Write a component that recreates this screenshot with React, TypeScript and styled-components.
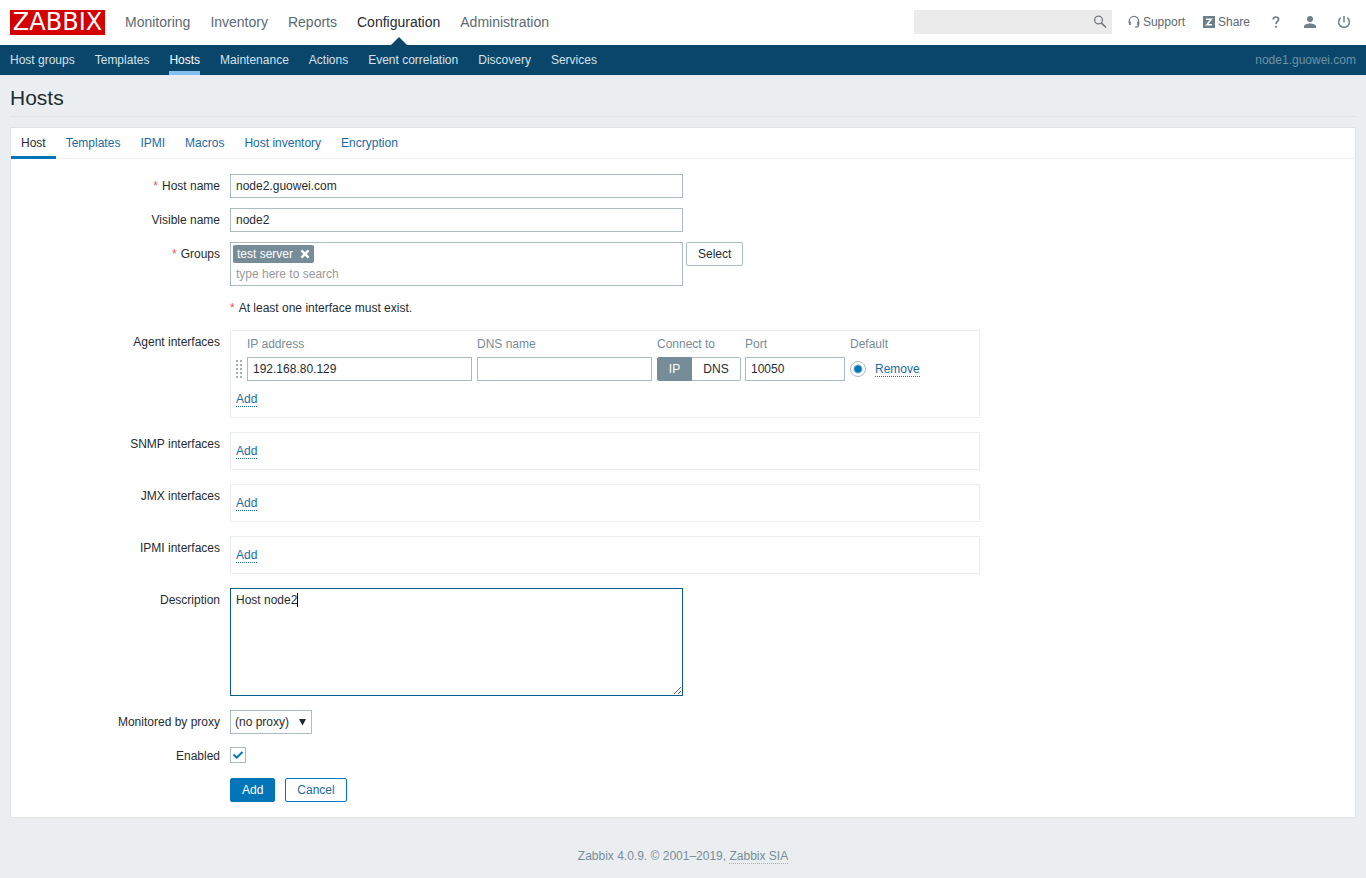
import React, { useEffect, useRef } from "react";
import styled, { createGlobalStyle, css } from "styled-components";

const GlobalStyle = createGlobalStyle`
  *, *::before, *::after { box-sizing: border-box; }
  html { background: #ebeef0; }
  body {
    margin: 0;
    color: #1f2c33;
    background: #ebeef0;
    font: 12px/16px Arial, "Liberation Sans", sans-serif;
  }
  button, input, select, textarea { font: inherit; color: inherit; margin: 0; }
  a { text-decoration: none; color: inherit; }
`;

const TopBar = styled.header`
  display: flex;
  align-items: flex-start;
  height: 45px;
  padding: 0 10px;
  background: #ffffff;
`;

const Logo = styled.a`
  width: 95px;
  height: 25px;
  margin: 10px 20px 0 0;
  background: #d40000;
  color: #ffffff;
  font-family: "DejaVu Sans", sans-serif;
  font-size: 24px;
  line-height: 25px;
  text-align: center;
`;

const MainNav = styled.nav`
  display: flex;
  gap: 20px;
  flex: 1;
  font-size: 14px;
  line-height: 45px;
`;

const MainLink = styled.a<{ $active?: boolean }>`
  position: relative;
  height: 45px;
  color: ${(p) => (p.$active ? "#1f2c33" : "#5c6a72")};
  ${(p) =>
    p.$active &&
    css`
      &::after {
        content: "";
        position: absolute;
        left: 50%;
        bottom: 0;
        margin-left: -8px;
        border: solid transparent;
        border-width: 0 8px 8px;
        border-bottom-color: #0a466a;
      }
    `}
`;

const Search = styled.form`
  display: flex;
  align-items: center;
  width: 198px;
  height: 24px;
  margin: 10px 16px 0 0;
  background: #ebebeb;
`;

const SearchInput = styled.input`
  flex: 1;
  min-width: 0;
  height: 24px;
  padding: 0 5px;
  border: 0;
  background: transparent;
  outline: 0;
`;

const IconButton = styled.button`
  display: flex;
  align-items: center;
  justify-content: center;
  width: 24px;
  height: 24px;
  padding: 0;
  border: 0;
  background: transparent;
`;

const Tools = styled.nav`
  display: flex;
  align-items: center;
  gap: 18px;
  height: 24px;
  margin: 10px 4px 0 0;
  color: #5c6a72;
`;

const Tool = styled.a`
  display: flex;
  align-items: center;
  justify-content: center;
  gap: 3px;
  min-width: 16px;
`;

const SubBar = styled.div`
  display: flex;
  justify-content: space-between;
  height: 30px;
  padding: 0 10px;
  background: #0a466a;
  line-height: 30px;
`;

const SubNav = styled.nav`
  display: flex;
  gap: 20px;
`;

const SubLink = styled.a<{ $active?: boolean }>`
  height: 30px;
  color: ${(p) => (p.$active ? "#ffffff" : "#d5e3ec")};
  box-shadow: ${(p) => (p.$active ? "inset 0 -4px #87c0ee" : "none")};
`;

const ServerName = styled.span`
  color: #6f93a8;
`;

const Page = styled.main`
  padding: 0 10px;
`;

const TitleBar = styled.div`
  height: 42px;
  margin-bottom: 10px;
  border-bottom: 1px solid #dfe4e7;
`;

const Title = styled.h1`
  margin: 0;
  font-size: 21px;
  font-weight: normal;
  line-height: 45px;
`;

const Panel = styled.section`
  padding-bottom: 10px;
  background: #ffffff;
  border: 1px solid #dfe4e7;
`;

const Tabs = styled.nav`
  display: flex;
  height: 31px;
  border-bottom: 1px solid #ebeef0;
  line-height: 30px;
`;

const Tab = styled.a<{ $active?: boolean }>`
  height: 31px;
  padding: 0 10px;
  color: ${(p) => (p.$active ? "#1f2c33" : "#1a6aa5")};
  box-shadow: ${(p) => (p.$active ? "inset 0 -3px #0275b8" : "none")};
`;

const Form = styled.form`
  padding-top: 10px;
`;

const Row = styled.div<{ $roomy?: boolean }>`
  display: grid;
  grid-template-columns: 209px minmax(0, 1fr);
  column-gap: 10px;
  padding: 5px 0 ${(p) => (p.$roomy ? 9 : 5)}px;
`;

const labelText = css`
  line-height: 24px;
  text-align: right;
`;

const Label = styled.label`
  ${labelText}
`;

const GroupLabel = styled.span`
  ${labelText}
`;

const Star = styled.span`
  margin-right: 4px;
  color: #e45959;
`;

const Field = styled.div<{ $gap?: number }>`
  display: flex;
  align-items: flex-start;
  gap: ${(p) => p.$gap ?? 3}px;
  min-height: 24px;
`;

const Note = styled.p`
  margin: 0;
  line-height: 24px;
`;

const TextInput = styled.input<{ $width: number }>`
  display: block;
  width: ${(p) => p.$width}px;
  height: 24px;
  padding: 0 5px;
  border: 1px solid #acbbc2;
  border-radius: 0;
  background: #ffffff;
  outline: 0;
`;

const MultiSelect = styled.div`
  width: 453px;
  height: 44px;
  padding: 2px;
  border: 1px solid #acbbc2;
`;

const Chip = styled.span`
  display: inline-flex;
  align-items: center;
  height: 18px;
  padding: 0 4px;
  gap: 7px;
  border-radius: 2px;
  background: #768d99;
  color: #ffffff;
`;

const ChipClose = styled.button`
  display: flex;
  padding: 0;
  border: 0;
  background: transparent;
  color: #ffffff;
`;

const MultiInput = styled.input`
  display: block;
  width: 100%;
  height: 20px;
  padding: 0 3px;
  border: 0;
  outline: 0;
  background: transparent;
  &::placeholder { color: #999999; opacity: 1; }
`;

const ChipLine = styled.div`
  display: flex;
  height: 19px;
`;

const Button = styled.button<{ $kind?: "primary" | "outline" }>`
  height: 24px;
  padding: 0 11px;
  border: 1px solid #acbbc2;
  border-radius: 2px;
  background: #ffffff;
  ${(p) =>
    p.$kind === "primary" &&
    css`
      border-color: #0275b8;
      background: #0275b8;
      color: #ffffff;
    `}
  ${(p) =>
    p.$kind === "outline" &&
    css`
      border-color: #0275b8;
      color: #1a6aa5;
    `}
`;

const InterfaceBox = styled.div`
  width: 750px;
  max-width: 100%;
  padding: 5px;
  border: 1px solid #ebeef0;
`;

const InterfaceTable = styled.table`
  border-collapse: collapse;
  th {
    height: 16px;
    padding: 0 5px 0 0;
    color: #768d99;
    font-weight: normal;
    text-align: left;
  }
  td { padding: 5px 5px 5px 0; }
  th:first-child, td:first-child { width: 11px; padding-right: 4px; }
  th:nth-child(4), td:nth-child(4) { padding-right: 4px; }
`;

const DefaultCell = styled.div`
  display: flex;
  align-items: center;
  gap: 9px;
`;

const AddLine = styled.div`
  display: flex;
  height: 26px;
  padding: 5px 0;
`;

const TextButton = styled.button`
  height: 16px;
  padding: 2px 0 0;
  border: 0;
  border-bottom: 1px dotted #1a6aa5;
  background: transparent;
  color: #1a6aa5;
  line-height: 13px;
`;

const Segmented = styled.fieldset`
  display: flex;
  width: 84px;
  height: 24px;
  margin: 0;
  padding: 0;
  border: 0;
`;

const Segment = styled.label`
  flex: 1;
  border: 1px solid #acbbc2;
  border-left: 0;
  border-radius: 0 2px 2px 0;
  line-height: 22px;
  text-align: center;
  &:first-child { flex: 0 0 35px; border-left: 1px solid #acbbc2; border-radius: 2px 0 0 2px; }
  input { appearance: none; position: absolute; }
  &:has(input:checked) { background: #768d99; border-color: #768d99; color: #ffffff; }
`;

const Radio = styled.input`
  appearance: none;
  width: 16px;
  height: 16px;
  border: 1px solid #acbbc2;
  border-radius: 50%;
  background: #ffffff;
  &:checked { background: radial-gradient(circle, #0275b8 0 3px, #ffffff 5px); }
`;

const DescriptionWrap = styled.div`
  position: relative;
`;

const Description = styled.textarea`
  display: block;
  width: 453px;
  height: 108px;
  padding: 3px 5px;
  border: 1px solid #0a5d8c;
  border-radius: 0;
  outline: 0;
  resize: both;
  caret-color: transparent;
`;

const Caret = styled.span`
  position: absolute;
  left: 67px;
  top: 5px;
  width: 1px;
  height: 14px;
  background: #000000;
  pointer-events: none;
`;

const SelectWrap = styled.div`
  position: relative;
  width: 82px;
  svg { position: absolute; right: 6px; top: 8px; pointer-events: none; }
`;

const Select = styled.select`
  appearance: none;
  width: 100%;
  height: 24px;
  padding: 0 4px;
  border: 1px solid #acbbc2;
  border-radius: 0;
  background: #ffffff;
`;

const CheckWrap = styled.span`
  position: relative;
  display: flex;
  width: 16px;
  height: 22px;
  align-items: center;
  svg { position: absolute; left: 2px; top: 6px; pointer-events: none; }
`;

const CheckBox = styled.input`
  appearance: none;
  width: 16px;
  height: 16px;
  border: 1px solid #acbbc2;
  background: #ffffff;
`;

const Footer = styled.footer`
  padding: 30px 10px 14px;
  color: #768d99;
  text-align: center;
  a { border-bottom: 1px dotted #a3b2ba; }
`;

const Magnifier = () => (
  <svg width="14" height="14" viewBox="0 0 14 14" fill="none" stroke="#6c7a82">
    <circle cx="5.5" cy="5" r="3.9" strokeWidth="1.3" />
    <path d="M8.3 7.8 13 12.500" strokeWidth="1.700" />
  </svg>
);

const Headset = () => (
  <svg width="12" height="14" viewBox="0 0 12 14" fill="none" stroke="#6c7f8a">
    <path d="M1.2 8V6.200a4.700 4.700 0 0 1 9.500 0v3.200c0 1.800-1 2.800-3.700 2.800" strokeWidth="1.300" />
    <path d="M1.9 6.500v3.500M10 6.500v3.500" strokeWidth="1.900" />
  </svg>
);

const ShareMark = () => (
  <svg width="12" height="12" viewBox="0 0 12 12">
    <path fill="#6c7f8a" d="M0 0h12v12H0z" />
    <path fill="none" stroke="#fff" strokeWidth="1.600" d="M3 3.200h5.200L3.800 8.800H9" />
  </svg>
);

const Question = () => (
  <svg width="8" height="12" viewBox="0 0 8 12" fill="none" stroke="#6c7f8a" strokeWidth="1.700">
    <path d="M1.200 3.600C1.200 1.900 2.300 1 3.900 1s2.700.9 2.700 2.300c0 1.900-2.600 2.200-2.600 4.700" />
    <path d="M4 9.800v2" />
  </svg>
);

const Person = () => (
  <svg width="14" height="14" viewBox="0 0 14 14" fill="#6c7f8a">
    <circle cx="7" cy="4" r="3" />
    <path d="M1 13v-1.600C1 9.300 4 8.400 7 8.400s6 .9 6 3V13z" />
  </svg>
);

const Power = () => (
  <svg width="14" height="14" viewBox="0 0 14 14" fill="none" stroke="#6c7f8a" strokeWidth="1.500">
    <path d="M7 1v6.500M3.700 2.700a5.400 5.400 0 1 0 6.600 0" />
  </svg>
);

const GripIcon = styled.svg`
  display: block;
`;

const Grip = () => (
  <GripIcon width="7" height="19" viewBox="0 0 7 19" fill="#a3b2ba">
    {[0, 4, 8, 12, 16].map((y) => (
      <path key={y} d={`M0 ${y}h2v2H0zM4 ${y}h2v2H4z`} />
    ))}
  </GripIcon>
);

const emptyInterfaces = ["SNMP interfaces", "JMX interfaces", "IPMI interfaces"];

export default function App() {
  const description = useRef<HTMLTextAreaElement>(null);

  useEffect(() => {
    const el = description.current;
    if (el) {
      el.focus();
      el.setSelectionRange(el.value.length, el.value.length);
    }
  }, []);

  return (
    <>
      <GlobalStyle />
      <TopBar>
        <Logo href="#">ZABBIX</Logo>
        <MainNav>
          {["Monitoring", "Inventory", "Reports", "Configuration", "Administration"].map((name) => (
            <MainLink key={name} href="#" $active={name === "Configuration"}>{name}</MainLink>
          ))}
        </MainNav>
        <Search>
          <SearchInput type="text" aria-label="Search" />
          <IconButton type="button" aria-label="Search"><Magnifier /></IconButton>
        </Search>
        <Tools>
          <Tool href="#"><Headset />Support</Tool>
          <Tool href="#"><ShareMark />Share</Tool>
          <Tool href="#" aria-label="Help"><Question /></Tool>
          <Tool href="#" aria-label="Profile"><Person /></Tool>
          <Tool href="#" aria-label="Sign out"><Power /></Tool>
        </Tools>
      </TopBar>
      <SubBar>
        <SubNav>
          {["Host groups", "Templates", "Hosts", "Maintenance", "Actions", "Event correlation", "Discovery", "Services"].map((name) => (
            <SubLink key={name} href="#" $active={name === "Hosts"}>{name}</SubLink>
          ))}
        </SubNav>
        <ServerName>node1.guowei.com</ServerName>
      </SubBar>
      <Page>
        <TitleBar><Title>Hosts</Title></TitleBar>
        <Panel>
          <Tabs>
            {["Host", "Templates", "IPMI", "Macros", "Host inventory", "Encryption"].map((name) => (
              <Tab key={name} href="#" $active={name === "Host"}>{name}</Tab>
            ))}
          </Tabs>
          <Form>
            <Row>
              <Label htmlFor="host"><Star>*</Star>Host name</Label>
              <Field><TextInput id="host" $width={453} defaultValue="node2.guowei.com" /></Field>
            </Row>
            <Row>
              <Label htmlFor="visible">Visible name</Label>
              <Field><TextInput id="visible" $width={453} defaultValue="node2" /></Field>
            </Row>
            <Row>
              <Label htmlFor="groups"><Star>*</Star>Groups</Label>
              <Field>
                <MultiSelect>
                  <ChipLine>
                    <Chip>
                      test server
                      <ChipClose type="button" aria-label="Remove test server">
                        <svg width="10" height="10" viewBox="0 0 10 10" stroke="#fff" strokeWidth="2.400">
                          <path d="M1.400 1.400l7.200 7.200M8.600 1.400L1.400 8.600" />
                        </svg>
                      </ChipClose>
                    </Chip>
                  </ChipLine>
                  <MultiInput id="groups" placeholder="type here to search" />
                </MultiSelect>
                <Button type="button">Select</Button>
              </Field>
            </Row>
            <Row>
              <span />
              <Note><Star>*</Star>At least one interface must exist.</Note>
            </Row>
            <Row $roomy>
              <GroupLabel>Agent interfaces</GroupLabel>
              <InterfaceBox>
                <InterfaceTable>
                  <thead>
                    <tr>
                      <th />
                      <th>IP address</th>
                      <th>DNS name</th>
                      <th>Connect to</th>
                      <th>Port</th>
                      <th>Default</th>
                    </tr>
                  </thead>
                  <tbody>
                    <tr>
                      <td><Grip /></td>
                      <td><TextInput $width={225} aria-label="IP address" defaultValue="192.168.80.129" /></td>
                      <td><TextInput $width={175} aria-label="DNS name" /></td>
                      <td>
                        <Segmented aria-label="Connect to">
                          <Segment><input type="radio" name="connect" defaultChecked />IP</Segment>
                          <Segment><input type="radio" name="connect" />DNS</Segment>
                        </Segmented>
                      </td>
                      <td><TextInput $width={100} aria-label="Port" defaultValue="10050" /></td>
                      <td>
                        <DefaultCell>
                          <Radio type="radio" name="default" aria-label="Default" defaultChecked />
                          <TextButton type="button">Remove</TextButton>
                        </DefaultCell>
                      </td>
                    </tr>
                  </tbody>
                </InterfaceTable>
                <AddLine><TextButton type="button">Add</TextButton></AddLine>
              </InterfaceBox>
            </Row>
            {emptyInterfaces.map((name) => (
              <Row key={name} $roomy>
                <GroupLabel>{name}</GroupLabel>
                <InterfaceBox>
                  <AddLine><TextButton type="button">Add</TextButton></AddLine>
                </InterfaceBox>
              </Row>
            ))}
            <Row $roomy>
              <Label htmlFor="description">Description</Label>
              <DescriptionWrap>
                <Description id="description" ref={description} defaultValue="Host node2" />
                <Caret />
              </DescriptionWrap>
            </Row>
            <Row>
              <Label htmlFor="proxy">Monitored by proxy</Label>
              <SelectWrap>
                <Select id="proxy"><option>(no proxy)</option></Select>
                <svg width="7" height="8" viewBox="0 0 7 8"><path d="M0 1h7L3.500 7.500z" fill="#1f2c33" /></svg>
              </SelectWrap>
            </Row>
            <Row>
              <Label htmlFor="enabled">Enabled</Label>
              <CheckWrap>
                <CheckBox id="enabled" type="checkbox" defaultChecked />
                <svg width="12" height="10" viewBox="0 0 12 10" fill="none" stroke="#0275b8" strokeWidth="2">
                  <path d="M1.500 4.500l3.200 3.200L10.500 2" />
                </svg>
              </CheckWrap>
            </Row>
            <Row>
              <span />
              <Field $gap={10}>
                <Button type="button" $kind="primary">Add</Button>
                <Button type="button" $kind="outline">Cancel</Button>
              </Field>
            </Row>
          </Form>
        </Panel>
      </Page>
      <Footer>Zabbix 4.0.9. © 2001–2019, <a href="#">Zabbix SIA</a></Footer>
    </>
  );
}
